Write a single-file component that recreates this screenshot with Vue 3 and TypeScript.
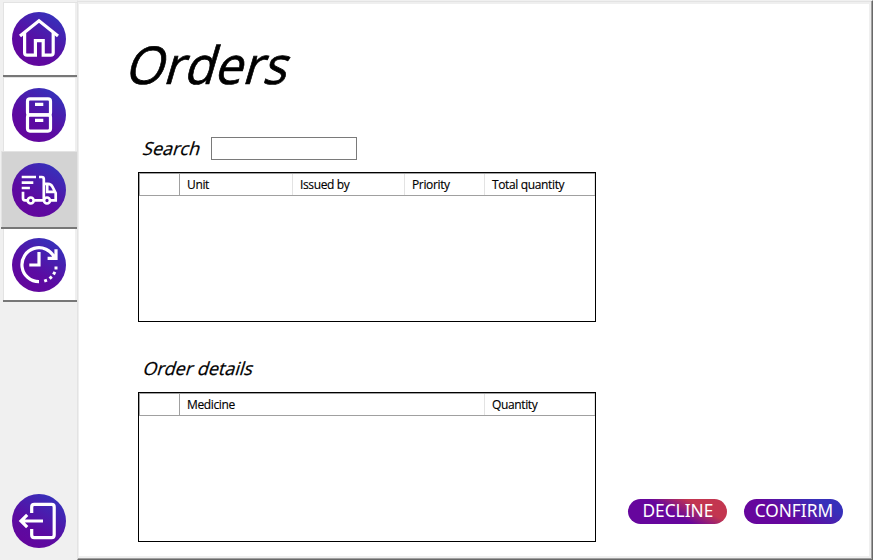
<script setup lang="ts">
import { ref } from 'vue'

interface Column {
  label: string
  width: number
}

const search = ref('')
const active = ref('orders')

const pages: string[] = ['home', 'storage', 'orders', 'history']

const orderColumns: Column[] = [
  { label: 'Unit', width: 113 },
  { label: 'Issued by', width: 112 },
  { label: 'Priority', width: 80 },
  { label: 'Total quantity', width: 110 },
]

const detailColumns: Column[] = [
  { label: 'Medicine', width: 305 },
  { label: 'Quantity', width: 110 },
]
</script>

<template>
  <div class="window">
    <svg class="defs" width="0" height="0">
      <defs>
        <linearGradient id="disc" x1="0.2" y1="0.9" x2="0.75" y2="0.05">
          <stop offset="0" stop-color="#63069d" />
          <stop offset="0.35" stop-color="#5b0ba2" />
          <stop offset="1" stop-color="#3730ba" />
        </linearGradient>
      </defs>
    </svg>

    <nav class="sidebar">
      <button
        v-for="page in pages"
        :key="page"
        class="tile"
        :class="[page, { active: active === page }]"
        :aria-label="page"
        @click="active = page"
      >
        <svg class="icon" viewBox="0 0 54 54">
          <circle class="disc" cx="27" cy="27" r="27" />
          <g v-if="page === 'home'">
            <path d="M8 24 27 8.7 46 24" />
            <path d="M12.6 21V40.7q0 2.5 2.5 2.5h8.3V28.6H31.2V43.2h7.5q2.5 0 2.5-2.5V21" />
          </g>
          <g v-else-if="page === 'storage'">
            <rect x="15.5" y="10.9" width="23" height="16" rx="2.5" />
            <rect x="15.5" y="26.9" width="23" height="16.2" rx="2.5" />
            <path d="M23 16.4h8.3M23 32.4h8.3" />
          </g>
          <g v-else-if="page === 'orders'" class="fine">
            <path d="M9.7 14H24M9.7 19.6h11.6M9.7 25h8.2" />
            <path d="M27 14h2.8q2 0 2 2V37.3M11 28.8v6.5q0 2 2 2h2.4M22.3 37.3h9.4" />
            <path d="M32 20.8h4q3 0 4.5 3l3.2 6.2v7.3h-5M35.2 21v7.8h7.5" />
            <circle cx="18.7" cy="37.5" r="3" />
            <circle cx="35" cy="37.5" r="3" />
          </g>
          <g v-else>
            <path d="M27 43.7A17 17 0 1 1 42.4 19.6M44 11.3v9h-8.4M27 14v13H17.3" />
            <path class="dots" d="M44 28.5v3M42.9 33.9l-1.4 2.6M39.8 38.7l-2.2 2M35 42.1l-2.8 1" />
          </g>
        </svg>
      </button>
      <button class="exit" aria-label="exit">
        <svg class="icon" viewBox="0 0 54 54">
          <circle class="disc" cx="27" cy="27" r="27" />
          <path d="M19.7 19v-6q0-2.6 2.6-2.6h17.3q2.6 0 2.6 2.6v28q0 2.6-2.6 2.6H22.3q-2.6 0-2.6-2.6v-6" />
          <path d="M31 27H9.5M15.2 20.8 9 27l6.2 6.2" />
        </svg>
      </button>
    </nav>

    <main class="panel">
      <h1><span>Orders</span></h1>

      <div class="search">
        <label for="search"><span>Search</span></label>
        <input id="search" v-model="search" type="text" />
      </div>
      <div class="grid">
        <div class="head">
          <div class="corner"></div>
          <div v-for="c in orderColumns" :key="c.label" class="cell" :style="{ width: c.width + 'px' }">
            <span>{{ c.label }}</span>
          </div>
        </div>
      </div>

      <h2><span>Order details</span></h2>
      <div class="bottom">
        <div class="grid">
          <div class="head">
            <div class="corner"></div>
            <div v-for="c in detailColumns" :key="c.label" class="cell" :style="{ width: c.width + 'px' }">
              <span>{{ c.label }}</span>
            </div>
          </div>
        </div>
        <div class="actions">
          <button class="pill decline"><span>DECLINE</span></button>
          <button class="pill confirm"><span>CONFIRM</span></button>
        </div>
      </div>
    </main>
  </div>
</template>

<style>
body {
  margin: 0;
  overflow: hidden;
}
</style>

<style scoped>
* {
  box-sizing: border-box;
}
.window {
  display: flex;
  width: 873px;
  height: 560px;
  background: #f0f0f0;
  font-family: 'Open Sans', 'Noto Sans', sans-serif;
  color: #000;
}
.defs {
  display: block;
  flex: none;
  width: 0;
}
button {
  display: flex;
  margin: 0;
  padding: 0;
  border: 0;
  background: none;
  font: inherit;
}
.sidebar {
  display: flex;
  flex-direction: column;
  flex: none;
  width: 77px;
  padding-top: 2px;
}
.tile {
  flex: none;
  width: 74px;
  height: 75px;
  margin-left: 3px;
  padding: 10px 0 0 9px;
  background: #fff;
  border-bottom: 2px solid #777;
  box-shadow: inset 1px 1px #e3e3e3, inset -2px 0 #efefef;
}
.tile.storage {
  height: 74px;
  padding-top: 11px;
  border-bottom: 0;
}
.tile.active {
  width: 76px;
  height: 78px;
  margin-left: 1px;
  padding: 12px 0 0 10px;
  background: #d3d3d3;
  box-shadow: inset 1px 1px #e3e3e3;
}
.tile.active .icon {
  margin-left: 1px;
}
.tile.history {
  height: 73px;
  padding-top: 9px;
  box-shadow: inset 1px 0 #e3e3e3, inset -2px 0 #efefef;
}
.icon {
  display: block;
  flex: none;
  width: 54px;
  height: 54px;
  fill: none;
  stroke: #fff;
  stroke-width: 3.2;
}
.fine {
  stroke-width: 2.7;
}
.dots {
  stroke-width: 3;
}
.disc {
  fill: url(#disc);
  stroke: none;
}
.exit {
  margin: auto 0 12px 12px;
}
.panel {
  width: 796px;
  height: 560px;
  padding: 0 0 0 60px;
  background: #fff;
  border: 1px solid;
  border-color: #f0f0f0 #696969 #696969 #e3e3e3;
  box-shadow: inset -1px -1px #a0a0a0, inset 0 1px #e3e3e3, inset -3px -3px #efefef, inset 1px 3px #efefef;
}
h1,
h2 {
  margin: 0;
  font-weight: 400;
  white-space: nowrap;
}
h1 span,
h2 span,
label span {
  display: inline-block;
  transform-origin: 0 75%;
}
h1 {
  height: 136px;
  padding: 27px 0 0;
  margin-left: -14px;
  font-size: 52px;
  line-height: 72px;
}
h1 span {
  transform: scaleX(0.96) skewX(-17deg);
  -webkit-text-stroke: 0.7px #000;
}
.search {
  display: flex;
  height: 35px;
}
label {
  width: 73px;
  padding-left: 4px;
  font-size: 18px;
  line-height: 23px;
}
label span,
h2 span {
  transform: skewX(-17deg);
  -webkit-text-stroke: 0.25px #000;
}
input {
  width: 146px;
  height: 23px;
  padding: 0 4px;
  border: 1px solid #7a7a7a;
  outline: 0;
  background: #fff;
}
.grid {
  width: 458px;
  height: 150px;
  border: 1px solid #000;
}
.head {
  display: flex;
  height: 23px;
  border-top: 1px solid #a0a0a0;
  border-bottom: 1px solid #a0a0a0;
  border-left: 1px solid #a0a0a0;
}
.corner {
  flex: none;
  width: 40px;
  border-right: 1px solid #a0a0a0;
}
.cell {
  flex: none;
  padding-left: 7px;
  border-right: 1px solid #e3e3e3;
  font-size: 12px;
  line-height: 22px;
  white-space: nowrap;
}
.cell span {
  display: inline-block;
  letter-spacing: -0.36px;
  -webkit-text-stroke: 0.15px #000;
}
h2 {
  height: 70px;
  padding: 34px 0 0 4px;
  font-size: 18px;
  line-height: 25px;
}
.bottom {
  display: flex;
  align-items: flex-end;
}
.actions {
  display: flex;
  gap: 17px;
  margin: 0 0 18px 32px;
}
.pill {
  align-items: center;
  justify-content: center;
  width: 99px;
  height: 25px;
  padding-bottom: 2px;
  border-radius: 13px;
  color: #fff;
  font-family: 'Noto Sans', sans-serif;
  font-size: 18px;
  line-height: 23px;
}
.pill span {
  transform: scaleX(0.96);
}
.decline {
  background: linear-gradient(30deg, #66069d 45%, #c33650 72%);
}
.confirm {
  background: linear-gradient(30deg, #66069d 40%, #3730ba 80%);
}
</style>
